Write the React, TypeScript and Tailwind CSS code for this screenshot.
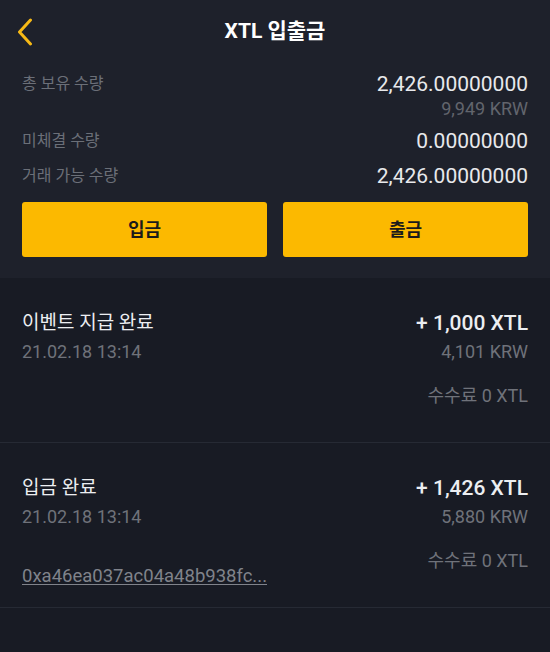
const font = "font-['Roboto','Noto_Sans_CJK_KR',sans-serif]";

const summary = [
  { label: "총 보유 수량", value: "2,426.00000000", sub: "9,949 KRW" },
  { label: "미체결 수량", value: "0.00000000" },
  { label: "거래 가능 수량", value: "2,426.00000000" },
];

const history = [
  { title: "이벤트 지급 완료", date: "21.02.18 13:14", amount: "+ 1,000 XTL", krw: "4,101 KRW", fee: "수수료 0 XTL" },
  {
    title: "입금 완료",
    date: "21.02.18 13:14",
    amount: "+ 1,426 XTL",
    krw: "5,880 KRW",
    fee: "수수료 0 XTL",
    hash: "0xa46ea037ac04a48b938fc...",
  },
];

export default function App() {
  return (
    <div className={`${font} w-[550px] h-[652px] bg-[#181b24] overflow-hidden`}>
      {/* 상단 요약 */}
      <div className="bg-[#1e212b] px-[22px] pb-[21px]">
        <div className="relative h-16 flex items-center justify-center">
          <svg className="absolute left-[-5px] top-[18px]" width="16" height="28" viewBox="0 0 16 28" fill="none">
            <path d="M13.5 2 L2.5 14 L13.5 26" stroke="#f6b916" strokeWidth="3" strokeLinecap="round" strokeLinejoin="round" />
          </svg>
          <h1 className="text-[21px] font-bold text-white">XTL 입출금</h1>
        </div>

        <div className="pt-[6px] flex flex-col gap-[7px]">
          {summary.map((row) => (
            <div key={row.label} className="flex justify-between items-start">
              <span className="text-[16px] leading-7 text-[#6b6f78]">{row.label}</span>
              <div className="flex flex-col items-end">
                <span className="text-[21px] leading-7 text-[#e8e9ec]">{row.value}</span>
                {row.sub && <span className="text-[18px] leading-[22px] text-[#62656d]">{row.sub}</span>}
              </div>
            </div>
          ))}
        </div>

        <div className="mt-[12px] grid grid-cols-2 gap-[16px]">
          <button className="h-[55px] rounded-[3px] bg-[#fcb900] text-[18px] font-bold text-[#1b1b1b]">입금</button>
          <button className="h-[55px] rounded-[3px] bg-[#fcb900] text-[18px] font-bold text-[#1b1b1b]">출금</button>
        </div>
      </div>

      {/* 입출금 내역 */}
      {history.map((item) => (
        <div key={item.title} className="h-[165px] border-b border-[#262a34] px-[22px] pt-[30px] flex justify-between items-start">
          <div className="flex flex-col">
            <span className="text-[19px] leading-[30px] text-[#eceef1]">{item.title}</span>
            <span className="text-[18px] leading-7 text-[#6f727a]">{item.date}</span>
            {item.hash && (
              <span className="mt-[33px] text-[18.5px] leading-6 text-[#80838b] underline underline-offset-2">{item.hash}</span>
            )}
          </div>
          <div className="flex flex-col items-end">
            <span className="text-[21px] leading-[30px] font-medium text-[#eceef1]">{item.amount}</span>
            <span className="text-[18px] leading-7 text-[#6f727a]">{item.krw}</span>
            <span className="mt-4 text-[18px] leading-7 text-[#6f727a]">{item.fee}</span>
          </div>
        </div>
      ))}
    </div>
  );
}
